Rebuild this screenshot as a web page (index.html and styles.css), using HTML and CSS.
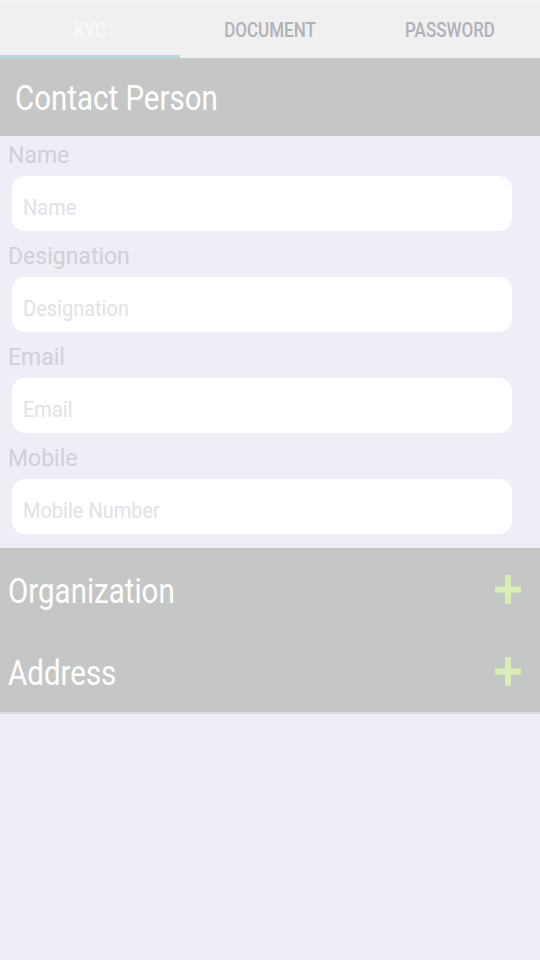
FILE: index.html
```html
<!DOCTYPE html>
<html>
<head>
<meta charset="utf-8">
<link rel="stylesheet" href="styles.css">
</head>
<body>
<div class="tabs">
  <div class="tab active"><span class="tab-text">KYC</span></div>
  <div class="tab"><span class="tab-text">DOCUMENT</span></div>
  <div class="tab"><span class="tab-text">PASSWORD</span></div>
</div>
<div class="section-head contact"><span class="head-text">Contact Person</span></div>
<div class="form">
  <div class="group">
    <div class="label"><span class="lt">Name</span></div>
    <div class="input"><span class="ph">Name</span></div>
  </div>
  <div class="group">
    <div class="label"><span class="lt">Designation</span></div>
    <div class="input"><span class="ph">Designation</span></div>
  </div>
  <div class="group">
    <div class="label"><span class="lt">Email</span></div>
    <div class="input"><span class="ph">Email</span></div>
  </div>
  <div class="group">
    <div class="label"><span class="lt">Mobile</span></div>
    <div class="input"><span class="ph">Mobile Number</span></div>
  </div>
</div>
<div class="collapsed">
  <div class="section-row"><span class="head-text">Organization</span>
    <svg class="plus" width="26" height="29" viewBox="0 0 26 29"><rect x="10" y="0" width="6" height="29" rx="1" fill="#d9eeb3"/><rect x="0" y="11.5" width="26" height="6" rx="1" fill="#d9eeb3"/></svg>
  </div>
  <div class="section-row"><span class="head-text">Address</span>
    <svg class="plus" width="26" height="29" viewBox="0 0 26 29"><rect x="10" y="0" width="6" height="29" rx="1" fill="#d9eeb3"/><rect x="0" y="11.5" width="26" height="6" rx="1" fill="#d9eeb3"/></svg>
  </div>
</div>
</body>
</html>
```
FILE: styles.css
```css
html, body {
  margin: 0;
  padding: 0;
}
body {
  width: 540px;
  height: 960px;
  background: #efedf5;
  font-family: Roboto, "Noto Sans", sans-serif;
  overflow: hidden;
}
.tabs {
  display: flex;
  height: 58px;
  background: #f0f0f0;
  border-top: 1px solid #f6f6f6;
  box-sizing: border-box;
}
.tab {
  flex: 1;
  display: flex;
  align-items: center;
  justify-content: center;
  box-sizing: border-box;
  border-bottom: 3px solid transparent;
  padding-top: 4px;
}
.tab.active {
  border-bottom-color: #b2dcd8;
}
.tab-text {
  display: inline-block;
  font-size: 17px;
  font-weight: 500;
  color: #b1b1b9;
  transform: scaleY(1.18);
}
.tab.active .tab-text {
  color: #f8f8f8;
}
.section-head {
  height: 78px;
  background: #c5c7c6;
  display: flex;
  align-items: center;
  padding-left: 15px;
  padding-top: 2px;
  box-sizing: border-box;
}
.head-text {
  display: inline-block;
  font-size: 29.5px;
  color: #ffffff;
  transform: scaleY(1.2);
}
.form {
  padding-bottom: 14px;
}
.group {
  display: flex;
  flex-direction: column;
}
.group + .group {
  margin-top: 6px;
}
.label {
  height: 40px;
  display: flex;
  align-items: center;
  padding-left: 8px;
  padding-bottom: 3px;
  box-sizing: border-box;
}
.lt {
  display: inline-block;
  font-size: 23px;
  color: #d1d0d7;
  transform: scaleY(1.08);
}
.input {
  margin-left: 12px;
  width: 500px;
  height: 55px;
  background: #ffffff;
  border-radius: 13px;
  display: flex;
  align-items: center;
  padding-left: 11px;
  padding-top: 7px;
  box-sizing: border-box;
}
.ph {
  display: inline-block;
  font-size: 20px;
  color: #e2e1e6;
  transform: scaleY(1.08);
}
.collapsed {
  background: #c5c7c6;
  border-bottom: 2px solid #dddce2;
}
.section-row {
  height: 82px;
  display: flex;
  align-items: center;
  justify-content: space-between;
  padding-left: 8px;
  padding-right: 19px;
}
.section-row .head-text {
  position: relative;
  top: 2px;
}
.plus {
  display: block;
}
```
